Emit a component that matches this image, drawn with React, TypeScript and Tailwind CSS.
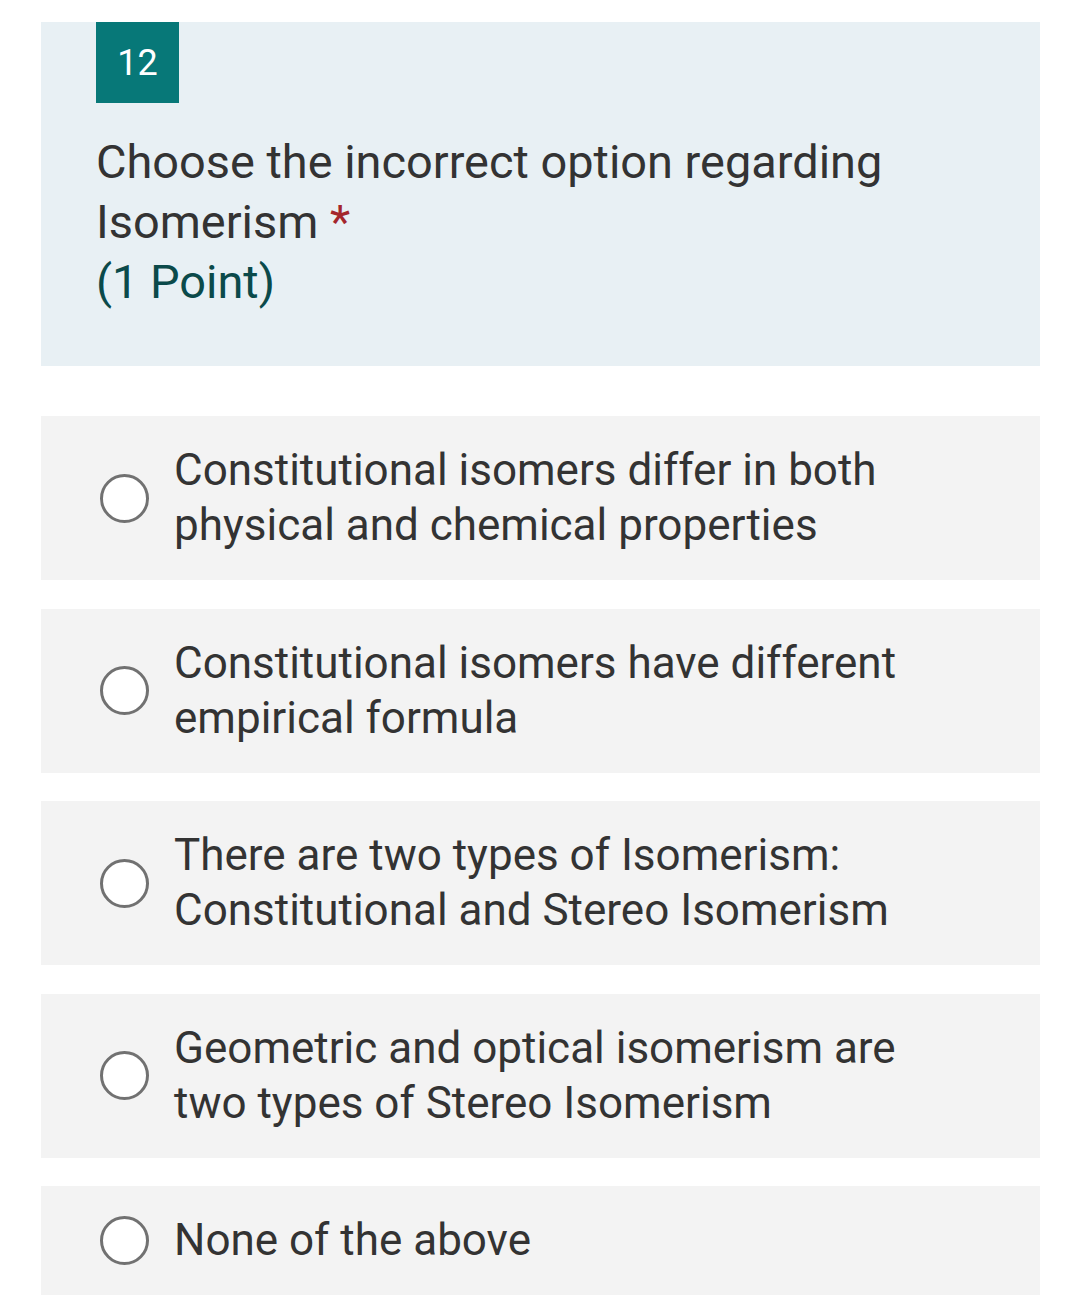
import React from "react";

const options = [
  "Constitutional isomers differ in both physical and chemical properties",
  "Constitutional isomers have different empirical formula",
  "There are two types of Isomerism: Constitutional and Stereo Isomerism",
  "Geometric and optical isomerism are two types of Stereo Isomerism",
  "None of the above",
];

export default function App() {
  return (
    <div
      className="w-[1080px] h-[1300px] overflow-hidden bg-white pt-[22px] pl-[41px] pr-[40px]"
      style={{ fontFamily: "Roboto, 'Noto Sans', Arial, sans-serif" }}
    >
      <div className="bg-[#e8f0f4] h-[344px] pl-[55px] pr-[55px]">
        <div className="inline-flex items-center justify-center w-[83px] h-[81px] bg-[#077878] text-white text-[36px] leading-none">
          12
        </div>
        <div className="mt-[29px] text-[46.9px] leading-[60px] text-[#333333]">
          Choose the incorrect option regarding Isomerism{" "}
          <span className="text-[#a4262c]">*</span>
          <div className="text-[#0b4a4a]">(1 Point)</div>
        </div>
      </div>
      <div className="mt-[50px] flex flex-col gap-[28.5px]">
        {options.map((o) => (
          <div
            key={o}
            className="bg-[#f3f3f3] flex items-center pl-[59px] pr-[105px] py-[27px]"
          >
            <div className="w-[49px] h-[49px] shrink-0 rounded-full border-[3px] border-[#717171] bg-white" />
            <div className="ml-[25px] text-[44px] leading-[55px] text-[#333333]">
              {o}
            </div>
          </div>
        ))}
      </div>
    </div>
  );
}
